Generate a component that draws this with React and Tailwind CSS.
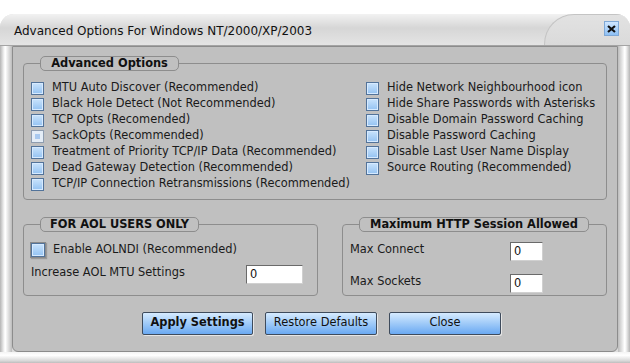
import React from "react";

const leftOpts = [
  { label: "MTU Auto Discover (Recommended)" },
  { label: "Black Hole Detect (Not Recommended)" },
  { label: "TCP Opts (Recomended)" },
  { label: "SackOpts (Recommended)", focus: true },
  { label: "Treatment of Priority TCP/IP Data (Recommended)" },
  { label: "Dead Gateway Detection (Recommended)" },
  { label: "TCP/IP Connection Retransmissions (Recommended)" },
];

const rightOpts = [
  "Hide Network Neighbourhood icon",
  "Hide Share Passwords with Asterisks",
  "Disable Domain Password Caching",
  "Disable Password Caching",
  "Disable Last User Name Display",
  "Source Routing (Recommended)",
];

function Check({ focus, glow }) {
  if (focus) {
    return (
      <span className="w-[13px] h-[13px] shrink-0 border border-[#8e9db0] bg-[#e4edf7] flex items-center justify-center">
        <span className="w-[5px] h-[5px] bg-[#a9c9ef]" />
      </span>
    );
  }
  return (
    <span
      className={
        glow
          ? "w-[14px] h-[14px] shrink-0 border border-[#52739a] bg-[linear-gradient(#c9e3fc,#93c2f2)] shadow-[inset_0_0_0_1px_#d6eaff,0_0_0_1px_#8a8a8a,1px_1px_1px_1px_#9a9a9a]"
          : "w-[13px] h-[13px] shrink-0 border border-[#52739a] bg-[linear-gradient(#c9e3fc,#93c2f2)] shadow-[inset_0_0_0_1px_#d6eaff]"
      }
    />
  );
}

function Row({ label, focus }) {
  return (
    <div className="h-[16px] flex items-center gap-[8px]">
      <Check focus={focus} />
      <span className="text-[11.4px] text-[#1a1a1a] leading-none whitespace-nowrap">{label}</span>
    </div>
  );
}

function Legend({ children, w }) {
  return (
    <legend
      className={`${w} ml-[9px] h-[15px] border border-[#8d8d8d] rounded-[5px] bg-[#c0c0c0] text-left`}
    >
      <div className="w-full text-center text-[11.4px] font-bold text-[#111] leading-[13px] whitespace-nowrap">
        {children}
      </div>
    </legend>
  );
}

function Btn({ children, bold }) {
  return (
    <button
      className={`h-[23px] border border-[#3e4b5c] rounded-[2px] bg-[linear-gradient(#d6ebff,#9fcaf8_50%,#6aa9f2)] shadow-[1px_1px_0_#e6e6e6] text-[11.4px] leading-none pb-[1px] text-[#111] ${bold ? "font-bold w-[111px]" : "w-[112px]"}`}
    >
      {children}
    </button>
  );
}

function Field({ w }) {
  return (
    <div className={`${w} h-[19px] bg-white border border-[#6a6a6a] border-r-[#d0d0d0] border-b-[#d0d0d0] text-[11.4px] leading-[17px] pl-[3px] text-[#111]`}>
      0
    </div>
  );
}

export default function App() {
  return (
    <div className="w-[630px] h-[363px] bg-white pt-[14px] font-['DejaVu_Sans',sans-serif] overflow-hidden">
      <div className="h-[349px] flex flex-col rounded-t-[14px] overflow-hidden bg-[#dcdcdc]">
        {/* title bar */}
        <div className="h-[32px] flex bg-[linear-gradient(#f2f2f2,#d6d6d6_45%,#e4e4e4)] border-b border-[#a4a4a4]">
          <div className="flex-1 pl-[14px] pt-[8px] text-[12px] text-[#111] whitespace-nowrap">
            Advanced Options For Windows NT/2000/XP/2003
          </div>
          <div className="w-[86px] border-l border-t border-[#c4c4c4] rounded-tl-[30px] bg-[linear-gradient(#e2e2e2,#dadada)] flex justify-end pt-[6px] pr-[11px]">
            <span className="w-[15px] h-[15px] bg-[linear-gradient(#cfe6ff,#8ec0f4)] border border-[#7fa8d6] flex items-center justify-center">
              <svg width="9" height="8" viewBox="0 0 9 8">
                <path d="M1 1 L8 7 M8 1 L1 7" stroke="#111" strokeWidth="2.2" />
              </svg>
            </span>
          </div>
        </div>

        {/* middle */}
        <div className="h-[306px] flex">
          <div className="w-[12px] bg-[linear-gradient(to_right,#b4b4b4,#f6f6f6_35%,#ffffff_45%,#dadada_75%,#bcbcbc)]" />
          <div className="flex-1 bg-[#c0c0c0] border border-[#8c8c8c] rounded-b-[6px] pl-[10px] pr-[10px] pt-[9px]">
            <fieldset className="h-[144px] border border-[#8d8d8d] rounded-[4px] px-[7px] pt-[9px]">
              <Legend w="w-[139px]">Advanced Options</Legend>
              <div className="flex">
                <div className="w-[335px] flex flex-col">
                  {leftOpts.map((o) => (
                    <Row key={o.label} label={o.label} focus={o.focus} />
                  ))}
                </div>
                <div className="flex flex-col">
                  {rightOpts.map((o) => (
                    <Row key={o} label={o} />
                  ))}
                </div>
              </div>
            </fieldset>

            <div className="flex gap-[24px] mt-[17px]">
              <fieldset className="w-[295px] h-[79px] border border-[#8d8d8d] rounded-[4px] px-[7px] pt-[10px]">
                <Legend w="w-[159px]">FOR AOL USERS ONLY</Legend>
                <div className="h-[16px] flex items-center gap-[8px]">
                  <Check glow />
                  <span className="text-[11.4px] text-[#1a1a1a] leading-none">Enable AOLNDI (Recommended)</span>
                </div>
                <div className="flex items-center mt-[7px]">
                  <span className="w-[215px] text-[11.4px] text-[#1a1a1a] leading-none -mt-[3px]">Increase AOL MTU Settings</span>
                  <Field w="w-[57px]" />
                </div>
              </fieldset>

              <fieldset className="w-[265px] h-[79px] border border-[#8d8d8d] rounded-[4px] px-[7px] pt-[10px]">
                <Legend w="w-[230px]">Maximum HTTP Session Allowed</Legend>
                <div className="flex items-center">
                  <span className="w-[160px] text-[11.4px] text-[#1a1a1a] leading-none -mt-[3px]">Max Connect</span>
                  <Field w="w-[33px]" />
                </div>
                <div className="flex items-center mt-[13px]">
                  <span className="w-[160px] text-[11.4px] text-[#1a1a1a] leading-none -mt-[3px]">Max Sockets</span>
                  <Field w="w-[33px]" />
                </div>
              </fieldset>
            </div>

            <div className="flex gap-[12px] ml-[119px] mt-[16px]">
              <Btn bold>Apply Settings</Btn>
              <Btn>Restore Defaults</Btn>
              <Btn>Close</Btn>
            </div>
          </div>
          <div className="w-[12px] bg-[linear-gradient(to_right,#bcbcbc,#dadada_25%,#ffffff_55%,#f6f6f6_65%,#b4b4b4)]" />
        </div>

        {/* bottom */}
        <div className="h-[11px] bg-[linear-gradient(#f4f4f4,#ffffff_30%,#d8d8d8_80%,#bdbdbd)]" />
      </div>
    </div>
  );
}
